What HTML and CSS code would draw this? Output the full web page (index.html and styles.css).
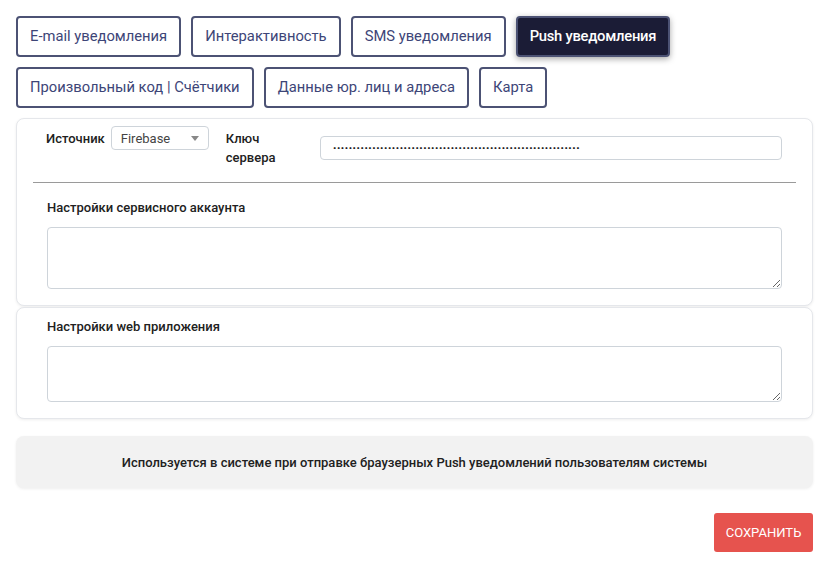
FILE: index.html
```html
<!DOCTYPE html>
<html lang="ru">
<head>
<meta charset="utf-8">
<title>Push уведомления</title>
<link rel="stylesheet" href="styles.css">
</head>
<body>
<div class="page">
  <nav class="tabs">
    <button class="tab">E-mail уведомления</button>
    <button class="tab">Интерактивность</button>
    <button class="tab">SMS уведомления</button>
    <button class="tab tab-active">Push уведомления</button>
    <button class="tab">Произвольный код | Счётчики</button>
    <button class="tab">Данные юр. лиц и адреса</button>
    <button class="tab">Карта</button>
  </nav>

  <section class="card card-main">
    <div class="source-row">
      <span class="label">Источник</span>
      <div class="select"><span>Firebase</span><span class="caret"></span></div>
      <span class="label key-label">Ключ сервера</span>
      <div class="input key-input"><span class="dots">&middot;&middot;&middot;&middot;&middot;&middot;&middot;&middot;&middot;&middot;&middot;&middot;&middot;&middot;&middot;&middot;&middot;&middot;&middot;&middot;&middot;&middot;&middot;&middot;&middot;&middot;&middot;&middot;&middot;&middot;&middot;&middot;&middot;&middot;&middot;&middot;&middot;&middot;&middot;&middot;&middot;&middot;&middot;&middot;&middot;&middot;&middot;&middot;&middot;&middot;&middot;&middot;&middot;&middot;&middot;&middot;&middot;&middot;&middot;&middot;&middot;&middot;&middot;</span></div>
    </div>
    <hr class="divider">
    <div class="field">
      <div class="label">Настройки сервисного аккаунта</div>
      <textarea class="textarea ta-service"></textarea>
    </div>
  </section>

  <section class="card card-web">
    <div class="field">
      <div class="label">Настройки web приложения</div>
      <textarea class="textarea ta-web"></textarea>
    </div>
  </section>

  <div class="info">Используется в системе при отправке браузерных Push уведомлений пользователям системы</div>

  <div class="actions">
    <button class="save">Сохранить</button>
  </div>
</div>
</body>
</html>
```
FILE: styles.css
```css
* { box-sizing: border-box; }
html, body { margin: 0; background: #fff; }
body {
  font-family: Roboto, "Noto Sans", "Liberation Sans", sans-serif;
  color: #222;
}
.page {
  width: 797px;
  margin: 16px 0 0 16px;
}
.tabs {
  display: flex;
  flex-wrap: wrap;
  gap: 10px;
}
.tab {
  height: 41px;
  padding: 0 12px;
  border: 2px solid #4c5274;
  border-radius: 4px;
  background: #fff;
  color: #3d4577;
  font-family: inherit;
  font-size: 14.75px;
  line-height: 1;
  cursor: pointer;
}
.tab-active {
  background: #1b1c36;
  color: #fff;
  font-weight: 500;
  letter-spacing: -0.25px;
  box-shadow: 0 2px 6px rgba(0, 0, 0, 0.35);
}
.card {
  border: 1px solid #e5e7eb;
  border-radius: 8px;
  box-shadow: 0 1px 3px rgba(0, 0, 0, 0.07);
  background: #fff;
  padding: 0 16px 16px;
}
.card-main {
  margin-top: 10px;
  padding-top: 7px;
}
.card-web {
  margin-top: 1px;
  padding-top: 9px;
}
.label {
  font-size: 13px;
  font-weight: 500;
  line-height: 19px;
  color: #212121;
}
.source-row {
  display: flex;
  align-items: flex-start;
  padding: 0 14px 0 13px;
}
.source-row .label { margin-top: 3px; }
.select {
  margin-left: 6px;
  width: 98px;
  height: 24px;
  border: 1px solid #ced4da;
  border-radius: 4px;
  display: flex;
  align-items: center;
  justify-content: space-between;
  padding: 0 9px 0 9px;
  font-size: 13px;
  color: #444;
}
.caret {
  width: 0;
  height: 0;
  border-left: 4px solid transparent;
  border-right: 4px solid transparent;
  border-top: 5px solid #888;
}
.key-label {
  width: 70px;
  margin-left: 17px;
  margin-right: 24px;
}
.input {
  flex: 1;
  height: 24px;
  margin-top: 10px;
  border: 1px solid #ced4da;
  border-radius: 4px;
  padding: 0 12px;
  font-size: 13px;
  line-height: 22px;
  color: #1a1a1a;
  font-weight: 700;
  white-space: nowrap;
}
.divider {
  border: 0;
  border-top: 1px solid #9a9a9a;
  margin: 15px 0 0;
}
.field {
  padding: 0 14px;
}
.card-main .field { padding-top: 15px; }
.textarea {
  display: block;
  width: 100%;
  margin: 10px 0 0;
  border: 1px solid #ced4da;
  border-radius: 4px;
  font-family: inherit;
  font-size: 13px;
  resize: vertical;
}
.ta-service { height: 62px; }
.ta-web { height: 56px; }
.info {
  margin-top: 17px;
  height: 52px;
  background: #f2f2f2;
  border-radius: 8px;
  box-shadow: 0 1px 3px rgba(0, 0, 0, 0.07);
  display: flex;
  align-items: center;
  justify-content: center;
  font-size: 13px;
  font-weight: 500;
  color: #212121;
}
.actions {
  display: flex;
  justify-content: flex-end;
  margin-top: 25px;
}
.save {
  width: 99px;
  height: 39px;
  background: #e6534e;
  border: 0;
  border-radius: 3px;
  color: #fff;
  font-family: inherit;
  font-size: 13px;
  text-transform: uppercase;
  cursor: pointer;
}
```
